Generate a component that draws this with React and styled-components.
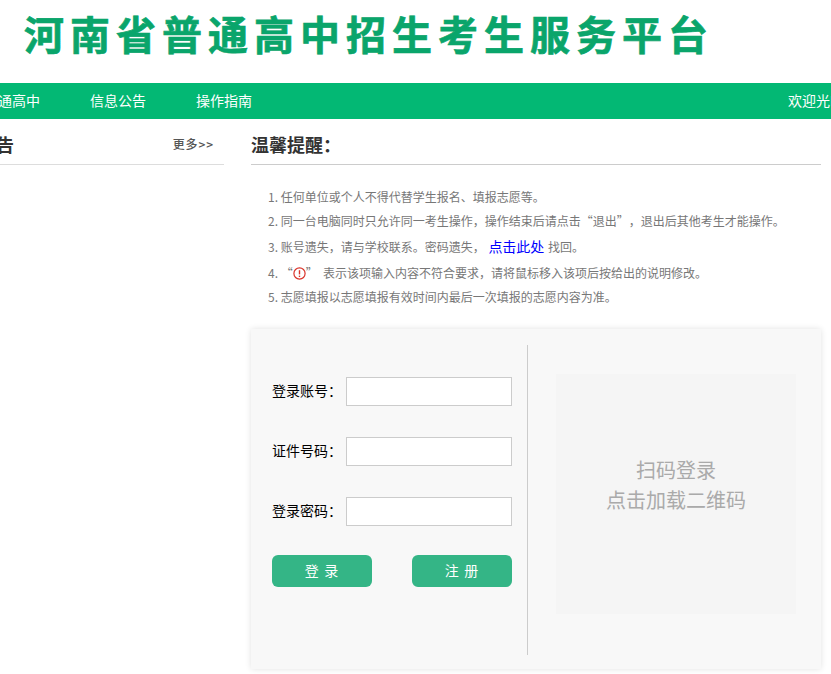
import React from "react";
import styled, { createGlobalStyle } from "styled-components";

const GlobalStyle = createGlobalStyle`
  html, body {
    margin: 0;
    padding: 0;
    background: #fff;
    overflow: hidden;
  }
  body {
    font-family: "Noto Sans CJK SC", "Liberation Sans", sans-serif;
    text-spacing-trim: space-all;
  }
`;

const Page = styled.div`
  width: 831px;
  height: 674px;
  overflow: hidden;
`;

const Header = styled.header`
  height: 83px;
  padding-left: 24px;
  box-sizing: border-box;
`;

const Logo = styled.h1`
  margin: 0;
  padding-top: 4px;
  font-size: 40px;
  line-height: 58px;
  font-weight: 700;
  -webkit-text-stroke: 0.7px #0aa56b;
  letter-spacing: 6px;
  color: #0aa56b;
  white-space: nowrap;
`;

const Nav = styled.nav`
  height: 36px;
  padding-bottom: 2px;
  box-sizing: border-box;
  background: #03b874;
  display: flex;
  align-items: center;
  color: #fff;
  font-size: 14px;
  white-space: nowrap;
  overflow: hidden;
`;

const NavItem = styled.a`
  flex: none;
  width: 56px;
  margin-right: 50px;
  &:first-child {
    margin-left: -16px;
  }
`;

const Welcome = styled.span`
  flex: none;
  margin-left: auto;
  margin-right: -30px;
  width: 73px;
`;

const Main = styled.main`
  display: flex;
  align-items: flex-start;
`;

const Side = styled.aside`
  width: 224px;
  flex: none;
  margin-right: 27px;
`;

const Content = styled.section`
  width: 570px;
  flex: none;
`;

const SectionHead = styled.div`
  height: 46px;
  box-sizing: border-box;
  display: flex;
  align-items: center;
  justify-content: space-between;
  padding-top: 4px;
  border-bottom: 1px solid ${(props) => (props.$light ? "#ddd" : "#ccc")};
`;

const SideHead = styled(SectionHead)`
  margin-left: -22px;
  padding-right: 10px;
`;

const Heading = styled.h2`
  margin: 0;
  font-size: 18px;
  line-height: 26px;
  font-weight: 700;
  color: #333;
`;

const More = styled.a`
  font-size: 12px;
  font-weight: 500;
  color: #555;
  letter-spacing: 0.9px;
`;

const Tips = styled.ol`
  margin: 0;
  padding: 19px 0 0 17px;
  list-style: none;
  height: 164px;
  box-sizing: border-box;
  font-size: 12px;
  color: #777;
`;

const Tip = styled.li`
  height: ${(props) => props.$h || 25}px;
  line-height: 25px;
  white-space: pre;
`;

const TipLink = styled.a`
  color: #00f;
  font-size: 14px;
  line-height: 20px;
  margin: 0 1px;
`;

const Warn = styled.svg`
  width: 13px;
  height: 13px;
  vertical-align: -2px;
`;

const Card = styled.div`
  height: 340px;
  background: #f8f8f8;
  box-shadow: 0 0 6px rgba(0, 0, 0, 0.12);
  display: flex;
  align-items: flex-start;
`;

const LoginForm = styled.form`
  width: 277px;
  height: 310px;
  margin-top: 16px;
  box-sizing: border-box;
  padding: 31px 15px 0 21px;
  border-right: 1px solid #ccc;
  flex: none;
`;

const Field = styled.label`
  display: flex;
  align-items: center;
  justify-content: space-between;
  height: 30px;
  margin-bottom: 30px;
  font-size: 14px;
  line-height: 26px;
  color: #000;
`;

const FieldName = styled.span`
  margin-bottom: 2px;
`;

const Input = styled.input`
  width: 166px;
  height: 29px;
  box-sizing: border-box;
  border: 1px solid #ccc;
  background: #fff;
  outline: none;
`;

const Buttons = styled.div`
  display: flex;
  justify-content: space-between;
  margin-top: -1px;
`;

const Button = styled.button`
  width: 100px;
  height: 32px;
  border: 0;
  border-radius: 6px;
  background: #34b586;
  color: #fff;
  font-family: inherit;
  font-size: 14px;
  letter-spacing: 1.2px;
  padding: 0 0 3px;
`;

const Qr = styled.div`
  width: 240px;
  height: 240px;
  padding-bottom: 18px;
  box-sizing: border-box;
  margin: 45px 0 0 28px;
  flex: none;
  background: #f5f5f5;
  color: #aaa;
  font-size: 20px;
  line-height: 30px;
  text-align: center;
  display: flex;
  flex-direction: column;
  justify-content: center;
`;

const WarnIcon = () => (
  <Warn viewBox="0 0 13 13">
    <circle cx="6.5" cy="6.5" r="5.6" fill="#fff" stroke="#d9342b" strokeWidth="1.2" />
    <path d="M6.5 3.2v4.2" stroke="#d9342b" strokeWidth="1.4" />
    <path d="M6.5 8.6v1.4" stroke="#d9342b" strokeWidth="1.4" />
  </Warn>
);

export default function App() {
  return (
    <Page>
      <GlobalStyle />
      <Header>
        <Logo>河南省普通高中招生考生服务平台</Logo>
      </Header>
      <Nav>
        <NavItem>普通高中</NavItem>
        <NavItem>信息公告</NavItem>
        <NavItem>操作指南</NavItem>
        <Welcome>欢迎光临！</Welcome>
      </Nav>
      <Main>
        <Side>
          <SideHead $light>
            <Heading>公告</Heading>
            <More>更多&gt;&gt;</More>
          </SideHead>
        </Side>
        <Content>
          <SectionHead>
            <Heading>温馨提醒：</Heading>
          </SectionHead>
          <Tips>
            <Tip $h={24}>1. 任何单位或个人不得代替学生报名、填报志愿等。</Tip>
            <Tip $h={26}>2. 同一台电脑同时只允许同一考生操作，操作结束后请点击“退出”，退出后其他考生才能操作。</Tip>
            <Tip $h={26}>
              3. 账号遗失，请与学校联系。密码遗失， <TipLink>点击此处</TipLink> 找回。
            </Tip>
            <Tip $h={24}>
              4. “<WarnIcon />”  表示该项输入内容不符合要求，请将鼠标移入该项后按给出的说明修改。
            </Tip>
            <Tip>5. 志愿填报以志愿填报有效时间内最后一次填报的志愿内容为准。</Tip>
          </Tips>
          <Card>
            <LoginForm>
              <Field>
                <FieldName>登录账号：</FieldName>
                <Input />
              </Field>
              <Field>
                <FieldName>证件号码：</FieldName>
                <Input />
              </Field>
              <Field>
                <FieldName>登录密码：</FieldName>
                <Input />
              </Field>
              <Buttons>
                <Button type="button">登 录</Button>
                <Button type="button">注 册</Button>
              </Buttons>
            </LoginForm>
            <Qr>
              <div>扫码登录</div>
              <div>点击加载二维码</div>
            </Qr>
          </Card>
        </Content>
      </Main>
    </Page>
  );
}
